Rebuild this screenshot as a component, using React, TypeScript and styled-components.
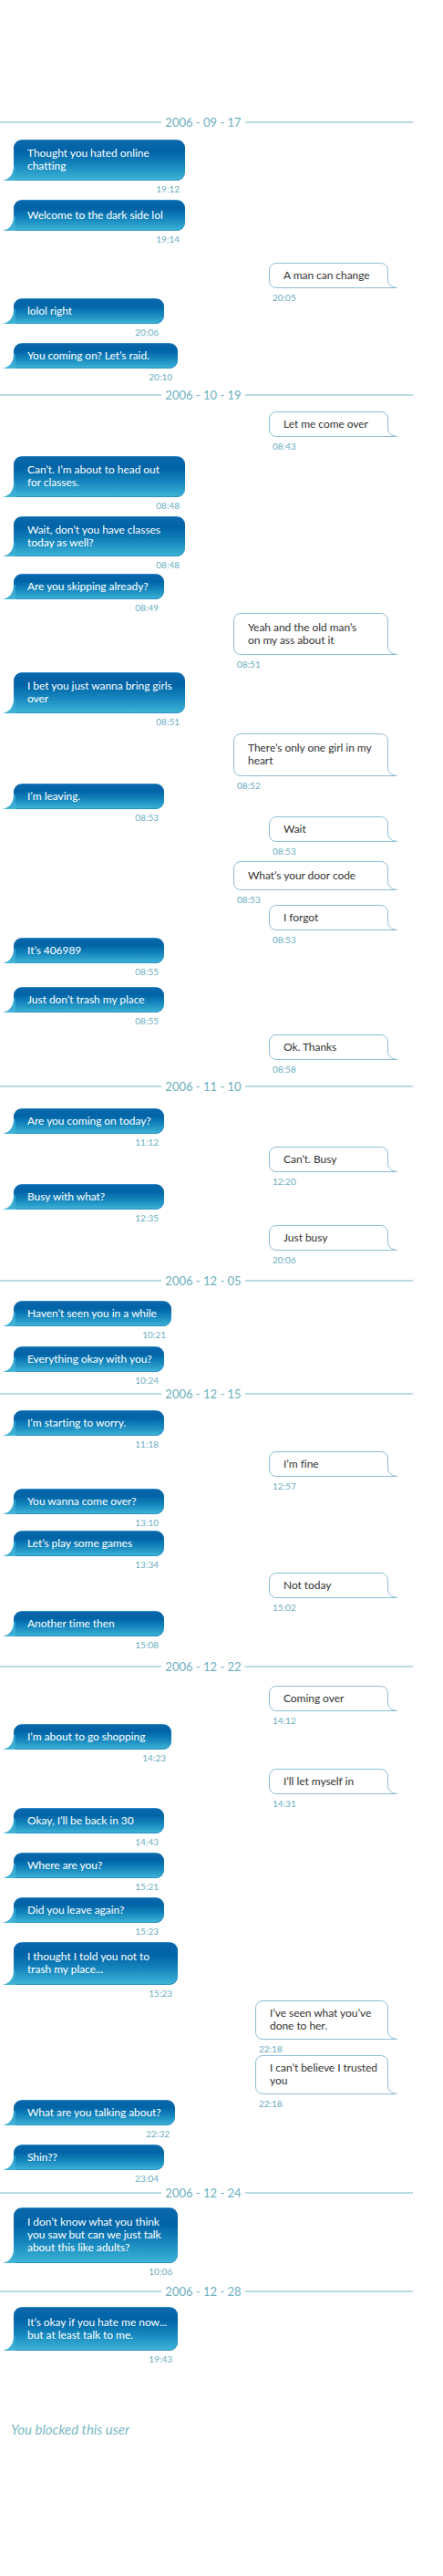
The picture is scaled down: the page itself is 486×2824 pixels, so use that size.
import React from "react";
import styled, { createGlobalStyle } from "styled-components";

const GlobalStyle = createGlobalStyle`
  html, body {
    margin: 0;
    padding: 0;
    background: #ffffff;
  }
  body {
    font-family: Lato, "Open Sans", sans-serif;
  }
`;

type Side = "in" | "out";

type MsgItem = {
  kind: "msg";
  side: Side;
  gap: number;
  w: number;
  h: number;
  time: string;
  lines: string[];
};

type DayItem = { kind: "day"; gap: number; date: string };

type Item = MsgItem | DayItem;

const day = (gap: number, date: string): DayItem => ({ kind: "day", gap, date });
const inc = (gap: number, w: number, h: number, time: string, ...lines: string[]): MsgItem => ({
  kind: "msg",
  side: "in",
  gap,
  w,
  h,
  time,
  lines,
});
const out = (gap: number, w: number, h: number, time: string, ...lines: string[]): MsgItem => ({
  kind: "msg",
  side: "out",
  gap,
  w,
  h,
  time,
  lines,
});

const thread: Item[] = [
  day(0, "2006 - 09 - 17"),
  inc(11, 188, 45, "19:12", "Thought you hated online", "chatting"),
  inc(5, 188, 34, "19:14", "Welcome to the dark side lol"),
  out(19, 131, 28, "20:05", "A man can change"),
  inc(-6, 165, 28, "20:06", "lolol right"),
  inc(5, 180, 28, "20:10", "You coming on?  Let’s raid."),
  day(5, "2006 - 10 - 19"),
  out(10, 131, 28, "08:43", "Let me come over"),
  inc(4, 188, 45, "08:48", "Can’t. I’m about to head out", "for classes."),
  inc(5, 188, 44, "08:48", "Wait, don’t you have classes", "today as well?"),
  inc(3, 165, 28, "08:49", "Are you skipping already?"),
  out(-1, 170, 46, "08:51", "Yeah and the old man’s", "on my ass about it"),
  inc(2, 188, 45, "08:51", "I bet you just wanna bring girls", "over"),
  out(6, 170, 47, "08:52", "There’s only one girl in my", "heart"),
  inc(-9, 165, 28, "08:53", "I’m leaving."),
  out(-8, 131, 28, "08:53", "Wait"),
  out(4, 170, 32, "08:53", "What’s your door code"),
  out(-1, 131, 28, "08:53", "I forgot"),
  inc(-9, 165, 28, "08:55", "It’s 406989"),
  inc(10, 165, 28, "08:55", "Just don’t trash my place"),
  out(8, 131, 28, "08:58", "Ok. Thanks"),
  day(4, "2006 - 11 - 10"),
  inc(16, 165, 28, "11:12", "Are you coming on today?"),
  out(-2, 131, 28, "12:20", "Can’t. Busy"),
  inc(-4, 165, 28, "12:35", "Busy with what?"),
  out(1, 131, 28, "20:06", "Just busy"),
  day(8, "2006 - 12 - 05"),
  inc(14, 173, 28, "10:21", "Haven’t seen you in a while"),
  inc(6, 165, 28, "10:24", "Everything okay with you?"),
  day(0, "2006 - 12 - 15"),
  inc(10, 165, 28, "11:18", "I’m starting to worry."),
  out(1, 131, 28, "12:57", "I’m fine"),
  inc(-4, 165, 28, "13:10", "You wanna come over?"),
  inc(2, 165, 28, "13:34", "Let’s play some games"),
  out(2, 131, 28, "15:02", "Not today"),
  inc(-3, 165, 28, "15:08", "Another time then"),
  day(9, "2006 - 12 - 22"),
  out(13, 131, 28, "14:12", "Coming over"),
  inc(-3, 173, 28, "14:23", "I’m about to go shopping"),
  out(5, 131, 28, "14:31", "I’ll let myself in"),
  inc(-2, 165, 28, "14:43", "Okay, I’ll be back in 30"),
  inc(5, 165, 28, "15:21", "Where are you?"),
  inc(5, 165, 28, "15:23", "Did you leave again?"),
  inc(5, 180, 47, "15:23", "I thought I told you not to", "trash my place..."),
  out(1, 146, 43, "22:18", "I’ve seen what you’ve", "done to her."),
  out(0, 146, 43, "22:18", "I can’t believe I trusted", "you"),
  inc(-11, 177, 28, "22:32", "What are you talking about?"),
  inc(5, 165, 28, "23:04", "Shin??"),
  day(1, "2006 - 12 - 24"),
  inc(8, 180, 61, "10:06", "I don’t know what you think", "you saw but can we just talk", "about this like adults?"),
  day(7, "2006 - 12 - 28"),
  inc(9, 180, 48, "19:43", "It’s okay if you hate me now...", "but at least talk to me."),
];

const InTail = () => (
  <InTailSvg width="14" height="16" viewBox="0 0 14 16">
    <defs>
      <linearGradient id="inTailFill" x1="0" y1="0" x2="0" y2="1">
        <stop offset="0" stopColor="#2b9dca" />
        <stop offset="1" stopColor="#44b5d7" />
      </linearGradient>
    </defs>
    <path d="M14 0 L12 0 C12 8 8.5 14 0 16 L14 16 Z" fill="url(#inTailFill)" />
  </InTailSvg>
);

const OutTail = () => (
  <OutTailSvg width="13" height="10" viewBox="0 0 13 10">
    <path d="M0 0 L1.5 0 C1.5 5 4 8.5 11.5 9.5 L0 9.5 Z" fill="#ffffff" />
    <path d="M1.5 0 C1.5 5 4 8.5 11.5 9.5 L0 9.5" fill="none" stroke="#8fbfd9" strokeWidth="1" />
  </OutTailSvg>
);

const Message = ({ item }: { item: MsgItem }) => (
  <MsgRow $side={item.side} $gap={item.gap}>
    <MsgBlock $w={item.w}>
      <Bubble $side={item.side} $h={item.h}>
        {item.lines.map((line, i) => (
          <span key={i}>{line}</span>
        ))}
        {item.side === "in" ? <InTail /> : <OutTail />}
      </Bubble>
      <Time $side={item.side}>{item.time}</Time>
    </MsgBlock>
  </MsgRow>
);

const DaySeparator = ({ item }: { item: DayItem }) => (
  <DayRow $gap={item.gap}>
    <DayLine />
    <DayLabel>{item.date}</DayLabel>
    <DayLine />
  </DayRow>
);

const App = () => {
  return (
    <>
      <GlobalStyle />
      <Page>
        <Thread>
          {thread.map((item, i) =>
            item.kind === "day" ? <DaySeparator key={i} item={item} /> : <Message key={i} item={item} />
          )}
        </Thread>
        <Blocked>You blocked this user</Blocked>
      </Page>
    </>
  );
};

const Page = styled.div`
  width: 486px;
  min-height: 2824px;
  box-sizing: border-box;
  padding-top: 126px;
  background: #ffffff;
`;

const Thread = styled.div`
  display: flex;
  flex-direction: column;
`;

const DayRow = styled.div<{ $gap: number }>`
  display: grid;
  grid-template-columns: 177px 92px 184px;
  align-items: center;
  height: 16px;
  margin-top: ${(p) => p.$gap}px;
`;

const DayLine = styled.div`
  height: 2px;
  background: #b9dce2;
`;

const DayLabel = styled.div`
  text-align: center;
  color: #6cafbe;
  font-size: 13px;
  line-height: 16px;
  white-space: nowrap;
`;

const MsgRow = styled.div<{ $side: Side; $gap: number }>`
  display: flex;
  justify-content: ${(p) => (p.$side === "in" ? "flex-start" : "flex-end")};
  padding: ${(p) => (p.$side === "in" ? "0 0 0 15px" : "0 60px 0 0")};
  margin-top: ${(p) => p.$gap}px;
`;

const MsgBlock = styled.div<{ $w: number }>`
  display: flex;
  flex-direction: column;
  width: ${(p) => p.$w}px;
`;

const Bubble = styled.div<{ $side: Side; $h: number }>`
  position: relative;
  box-sizing: border-box;
  height: ${(p) => p.$h}px;
  display: flex;
  flex-direction: column;
  justify-content: center;
  padding: 0 8px 1px 15px;
  font-size: 12px;
  letter-spacing: -0.05px;
  line-height: 14px;
  white-space: nowrap;
  ${(p) =>
    p.$side === "in"
      ? `
    color: #ffffff;
    border-radius: 9px 9px 9px 0;
    background: linear-gradient(180deg, #3d9ad3 0, #0a67aa 1.5px, #0064a7 30%, #1686bd 62%, #33a9d1 90%, #45b6d7 100%);
    box-shadow: inset 0 -1px 0 #2c90c4;
  `
      : `
    color: #333333;
    background: #ffffff;
    border: 1px solid #8fbfd9;
    border-radius: 8px 8px 0 8px;
  `}
`;

const InTailSvg = styled.svg`
  position: absolute;
  left: -12px;
  bottom: 0;
  display: block;
`;

const OutTailSvg = styled.svg`
  position: absolute;
  right: -12px;
  bottom: -1px;
  display: block;
`;

const Time = styled.div<{ $side: Side }>`
  margin-top: ${(p) => (p.$side === "in" ? "3px" : "4px")};
  font-size: 10px;
  line-height: 13px;
  color: #6aaebf;
  text-align: ${(p) => (p.$side === "in" ? "right" : "left")};
  padding: ${(p) => (p.$side === "in" ? "0 6px 0 0" : "0 0 0 4px")};
`;

const Blocked = styled.div`
  margin-top: 60px;
  padding-left: 12px;
  font-size: 15px;
  line-height: 20px;
  font-style: italic;
  color: #7ab8c5;
`;

export default App;
